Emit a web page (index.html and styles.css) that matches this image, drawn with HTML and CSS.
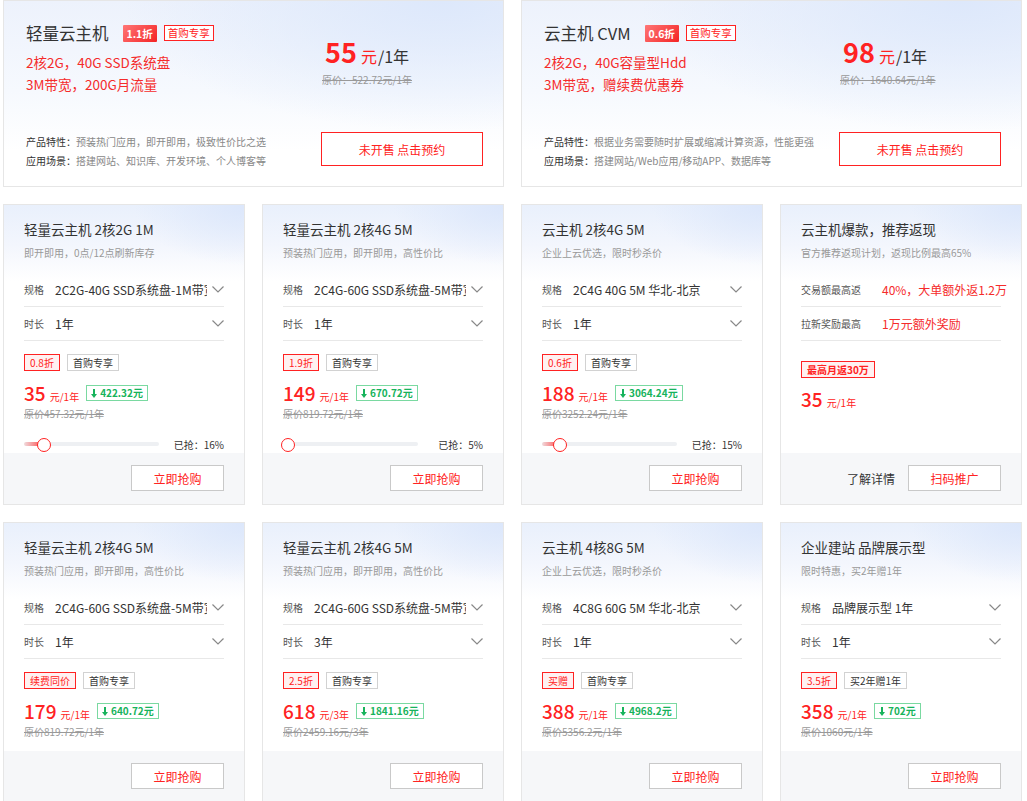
FILE: index.html
```html
<!DOCTYPE html>
<html lang="zh-CN">
<head>
  <meta charset="UTF-8" />
  <title>云服务器特惠</title>
  <meta name="viewport" content="width=device-width, initial-scale=1" />
  <link rel="stylesheet" href="styles.css">
</head>
<body>
<div class="page">
  <div class="hero-row">
    <div class="hero">
      <div class="hero-main">
        <div class="hero-title"><span class="name">轻量云主机</span><span class="badge">1.1折</span><span class="badge-line">首购专享</span></div>
        <div class="hero-spec">2核2G，40G SSD系统盘<br>3M带宽，200G月流量</div>
        <div class="features">
          <div><b>产品特性：</b>预装热门应用，即开即用，极致性价比之选</div>
          <div><b>应用场景：</b>搭建网站、知识库、开发环境、个人博客等</div>
        </div>
      </div>
      <div class="hero-side">
        <div class="hero-price"><span class="num">55</span><span class="unit">元</span><span class="per">/1年</span></div>
        <div class="hero-orig">原价：522.72元/1年</div>
        <button class="btn-book">未开售 点击预约</button>
      </div>
    </div>
    <div class="hero">
      <div class="hero-main">
        <div class="hero-title"><span class="name">云主机 CVM</span><span class="badge">0.6折</span><span class="badge-line">首购专享</span></div>
        <div class="hero-spec">2核2G，40G容量型Hdd<br>3M带宽，赠续费优惠券</div>
        <div class="features">
          <div><b>产品特性：</b>根据业务需要随时扩展或缩减计算资源，性能更强</div>
          <div><b>应用场景：</b>搭建网站/Web应用/移动APP、数据库等</div>
        </div>
      </div>
      <div class="hero-side">
        <div class="hero-price"><span class="num">98</span><span class="unit">元</span><span class="per">/1年</span></div>
        <div class="hero-orig">原价：1640.64元/1年</div>
        <button class="btn-book">未开售 点击预约</button>
      </div>
    </div>
  </div>

  <div class="grid">
    <div class="card">
      <div class="card-body">
        <div class="card-title">轻量云主机 2核2G 1M</div>
        <div class="card-sub">即开即用，0点/12点刷新库存</div>
        <div class="select"><span class="label">规格</span><span class="value">2C2G-40G SSD系统盘-1M带宽</span><svg class="chev" width="12" height="7" viewBox="0 0 12 7"><polyline points="0.5,0.5 6,6 11.5,0.5" fill="none" stroke="#888" stroke-width="1.2"/></svg></div>
        <div class="select"><span class="label">时长</span><span class="value">1年</span><svg class="chev" width="12" height="7" viewBox="0 0 12 7"><polyline points="0.5,0.5 6,6 11.5,0.5" fill="none" stroke="#888" stroke-width="1.2"/></svg></div>
        <div class="tags"><span class="tag red">0.8折</span><span class="tag">首购专享</span></div>
        <div class="price"><span class="num">35</span><span class="per">元/1年</span><span class="save"><svg width="6" height="9" viewBox="0 0 6 9"><path d="M2 0h2v5h2L3 9 0 5h2z" fill="#17b35c"/></svg>422.32元</span></div>
        <div class="orig">原价457.32元/1年</div>
        <div class="progress"><div class="track"><div class="fill" style="width:16%"></div></div><span class="sold">已抢：16%</span></div>
      </div>
      <div class="card-foot"><button class="btn">立即抢购</button></div>
    </div>

    <div class="card">
      <div class="card-body">
        <div class="card-title">轻量云主机 2核4G 5M</div>
        <div class="card-sub">预装热门应用，即开即用，高性价比</div>
        <div class="select"><span class="label">规格</span><span class="value">2C4G-60G SSD系统盘-5M带宽</span><svg class="chev" width="12" height="7" viewBox="0 0 12 7"><polyline points="0.5,0.5 6,6 11.5,0.5" fill="none" stroke="#888" stroke-width="1.2"/></svg></div>
        <div class="select"><span class="label">时长</span><span class="value">1年</span><svg class="chev" width="12" height="7" viewBox="0 0 12 7"><polyline points="0.5,0.5 6,6 11.5,0.5" fill="none" stroke="#888" stroke-width="1.2"/></svg></div>
        <div class="tags"><span class="tag red">1.9折</span><span class="tag">首购专享</span></div>
        <div class="price"><span class="num">149</span><span class="per">元/1年</span><span class="save"><svg width="6" height="9" viewBox="0 0 6 9"><path d="M2 0h2v5h2L3 9 0 5h2z" fill="#17b35c"/></svg>670.72元</span></div>
        <div class="orig">原价819.72元/1年</div>
        <div class="progress"><div class="track"><div class="fill" style="width:5%"></div></div><span class="sold">已抢：5%</span></div>
      </div>
      <div class="card-foot"><button class="btn">立即抢购</button></div>
    </div>

    <div class="card">
      <div class="card-body">
        <div class="card-title">云主机 2核4G 5M</div>
        <div class="card-sub">企业上云优选，限时秒杀价</div>
        <div class="select"><span class="label">规格</span><span class="value">2C4G 40G 5M 华北-北京</span><svg class="chev" width="12" height="7" viewBox="0 0 12 7"><polyline points="0.5,0.5 6,6 11.5,0.5" fill="none" stroke="#888" stroke-width="1.2"/></svg></div>
        <div class="select"><span class="label">时长</span><span class="value">1年</span><svg class="chev" width="12" height="7" viewBox="0 0 12 7"><polyline points="0.5,0.5 6,6 11.5,0.5" fill="none" stroke="#888" stroke-width="1.2"/></svg></div>
        <div class="tags"><span class="tag red">0.6折</span><span class="tag">首购专享</span></div>
        <div class="price"><span class="num">188</span><span class="per">元/1年</span><span class="save"><svg width="6" height="9" viewBox="0 0 6 9"><path d="M2 0h2v5h2L3 9 0 5h2z" fill="#17b35c"/></svg>3064.24元</span></div>
        <div class="orig">原价3252.24元/1年</div>
        <div class="progress"><div class="track"><div class="fill" style="width:15%"></div></div><span class="sold">已抢：15%</span></div>
      </div>
      <div class="card-foot"><button class="btn">立即抢购</button></div>
    </div>

    <div class="card">
      <div class="card-body">
        <div class="card-title">云主机爆款，推荐返现</div>
        <div class="card-sub">官方推荐返现计划，返现比例最高65%</div>
        <div class="select"><span class="rlabel">交易额最高返</span><span class="rvalue">40%，大单额外返1.2万</span></div>
        <div class="select"><span class="rlabel">拉新奖励最高</span><span class="rvalue">1万元额外奖励</span></div>
        <div class="tags tags-rebate"><span class="tag red strong">最高月返30万</span></div>
        <div class="price price-rebate"><span class="num">35</span><span class="per">元/1年</span></div>
      </div>
      <div class="card-foot"><span class="more">了解详情</span><button class="btn">扫码推广</button></div>
    </div>

    <div class="card">
      <div class="card-body">
        <div class="card-title">轻量云主机 2核4G 5M</div>
        <div class="card-sub">预装热门应用，即开即用，高性价比</div>
        <div class="select"><span class="label">规格</span><span class="value">2C4G-60G SSD系统盘-5M带宽</span><svg class="chev" width="12" height="7" viewBox="0 0 12 7"><polyline points="0.5,0.5 6,6 11.5,0.5" fill="none" stroke="#888" stroke-width="1.2"/></svg></div>
        <div class="select"><span class="label">时长</span><span class="value">1年</span><svg class="chev" width="12" height="7" viewBox="0 0 12 7"><polyline points="0.5,0.5 6,6 11.5,0.5" fill="none" stroke="#888" stroke-width="1.2"/></svg></div>
        <div class="tags"><span class="tag red">续费同价</span><span class="tag">首购专享</span></div>
        <div class="price"><span class="num">179</span><span class="per">元/1年</span><span class="save"><svg width="6" height="9" viewBox="0 0 6 9"><path d="M2 0h2v5h2L3 9 0 5h2z" fill="#17b35c"/></svg>640.72元</span></div>
        <div class="orig">原价819.72元/1年</div>
      </div>
      <div class="card-foot"><button class="btn">立即抢购</button></div>
    </div>

    <div class="card">
      <div class="card-body">
        <div class="card-title">轻量云主机 2核4G 5M</div>
        <div class="card-sub">预装热门应用，即开即用，高性价比</div>
        <div class="select"><span class="label">规格</span><span class="value">2C4G-60G SSD系统盘-5M带宽</span><svg class="chev" width="12" height="7" viewBox="0 0 12 7"><polyline points="0.5,0.5 6,6 11.5,0.5" fill="none" stroke="#888" stroke-width="1.2"/></svg></div>
        <div class="select"><span class="label">时长</span><span class="value">3年</span><svg class="chev" width="12" height="7" viewBox="0 0 12 7"><polyline points="0.5,0.5 6,6 11.5,0.5" fill="none" stroke="#888" stroke-width="1.2"/></svg></div>
        <div class="tags"><span class="tag red">2.5折</span><span class="tag">首购专享</span></div>
        <div class="price"><span class="num">618</span><span class="per">元/3年</span><span class="save"><svg width="6" height="9" viewBox="0 0 6 9"><path d="M2 0h2v5h2L3 9 0 5h2z" fill="#17b35c"/></svg>1841.16元</span></div>
        <div class="orig">原价2459.16元/3年</div>
      </div>
      <div class="card-foot"><button class="btn">立即抢购</button></div>
    </div>

    <div class="card">
      <div class="card-body">
        <div class="card-title">云主机 4核8G 5M</div>
        <div class="card-sub">企业上云优选，限时秒杀价</div>
        <div class="select"><span class="label">规格</span><span class="value">4C8G 60G 5M 华北-北京</span><svg class="chev" width="12" height="7" viewBox="0 0 12 7"><polyline points="0.5,0.5 6,6 11.5,0.5" fill="none" stroke="#888" stroke-width="1.2"/></svg></div>
        <div class="select"><span class="label">时长</span><span class="value">1年</span><svg class="chev" width="12" height="7" viewBox="0 0 12 7"><polyline points="0.5,0.5 6,6 11.5,0.5" fill="none" stroke="#888" stroke-width="1.2"/></svg></div>
        <div class="tags"><span class="tag red">买赠</span><span class="tag">首购专享</span></div>
        <div class="price"><span class="num">388</span><span class="per">元/1年</span><span class="save"><svg width="6" height="9" viewBox="0 0 6 9"><path d="M2 0h2v5h2L3 9 0 5h2z" fill="#17b35c"/></svg>4968.2元</span></div>
        <div class="orig">原价5356.2元/1年</div>
      </div>
      <div class="card-foot"><button class="btn">立即抢购</button></div>
    </div>

    <div class="card">
      <div class="card-body">
        <div class="card-title">企业建站 品牌展示型</div>
        <div class="card-sub">限时特惠，买2年赠1年</div>
        <div class="select"><span class="label">规格</span><span class="value">品牌展示型 1年</span><svg class="chev" width="12" height="7" viewBox="0 0 12 7"><polyline points="0.5,0.5 6,6 11.5,0.5" fill="none" stroke="#888" stroke-width="1.2"/></svg></div>
        <div class="select"><span class="label">时长</span><span class="value">1年</span><svg class="chev" width="12" height="7" viewBox="0 0 12 7"><polyline points="0.5,0.5 6,6 11.5,0.5" fill="none" stroke="#888" stroke-width="1.2"/></svg></div>
        <div class="tags"><span class="tag red">3.5折</span><span class="tag">买2年赠1年</span></div>
        <div class="price"><span class="num">358</span><span class="per">元/1年</span><span class="save"><svg width="6" height="9" viewBox="0 0 6 9"><path d="M2 0h2v5h2L3 9 0 5h2z" fill="#17b35c"/></svg>702元</span></div>
        <div class="orig">原价1060元/1年</div>
      </div>
      <div class="card-foot"><button class="btn">立即抢购</button></div>
    </div>
  </div>
</div>
</body>
</html>
```

FILE: styles.css
```css
*{box-sizing:border-box;}
body{
  margin:0;background:#fff;color:#333;
  font-family:"Noto Sans CJK SC","Noto Sans",sans-serif;
}
button{font-family:inherit;cursor:pointer;}
.page{width:1022px;padding-left:3px;}

/* top two large cards */
.hero-row{display:grid;grid-template-columns:501px 501px;gap:17px;}
.hero{
  display:flex;height:187px;border:1px solid #e6e6e6;
  padding:20px 20px 0 22px;
  background:
    radial-gradient(ellipse 320px 130px at 88% 0,#dde8fb 0,rgba(221,232,251,0) 100%),
    linear-gradient(180deg,#edf2fc 0,#f6f9fe 90px,#fff 150px);
}
.hero-main{flex:1;display:flex;flex-direction:column;min-width:0;}
.hero-title{display:flex;align-items:center;height:24px;font-size:16.5px;color:#333;}
.hero-title .name{margin-right:14px;}
.badge{
  height:17px;line-height:17px;padding:0 4px;font-size:10.5px;font-weight:bold;color:#fff;
  background:linear-gradient(135deg,#ff7676,#f42424);border-radius:1px;margin-right:7px;
}
.badge-line{
  height:16px;line-height:14px;padding:0 3px;font-size:10.5px;color:#f22;
  border:1px solid #f22;background:#fff;
}
.hero-spec{margin-top:6px;font-size:13.5px;line-height:22px;color:#f52b2b;}
.features{margin-top:auto;padding-bottom:16px;font-size:10px;line-height:19px;color:#888;}
.features b{font-weight:normal;color:#333;}
.hero-side{width:162px;display:flex;flex-direction:column;}
.hero-price{margin-top:15px;height:32px;line-height:32px;padding-left:4px;white-space:nowrap;}
.hero-price .num{font-size:27px;font-weight:bold;color:#f22;}
.hero-price .unit{font-size:16px;color:#f22;margin-left:4px;}
.hero-price .per{font-size:16px;color:#333;margin-left:1px;}
.hero-orig{margin-top:5px;line-height:14px;font-size:10px;color:#999;text-decoration:line-through;padding-left:1px;}
.btn-book{
  margin-top:auto;margin-bottom:20px;height:34px;width:162px;
  border:1px solid #f22;background:#fff;color:#f22;font-size:12px;
}

/* product grid */
.grid{display:grid;grid-template-columns:repeat(4,242px);gap:17px;margin-top:17px;}
.card{
  display:flex;flex-direction:column;border:1px solid #e6e6e6;
  background:
    radial-gradient(ellipse 110px 60px at 100% 0,#dce7fb 0,rgba(220,231,251,0) 100%),
    linear-gradient(180deg,#e9f0fc 0,#f3f6fd 40px,#fff 76px);
}
.card-body{padding:14px 20px 12px;}
.card-title{font-size:13.5px;line-height:20px;color:#333;}
.card-sub{margin-top:6px;font-size:10px;line-height:16px;color:#999;}
.select{display:flex;align-items:center;height:34px;border-bottom:1px solid #e8e8e8;}
.card-sub + .select{margin-top:12px;}
.select .label{width:31px;flex:none;font-size:10px;color:#555;}
.select .value{flex:1;min-width:0;overflow:hidden;white-space:nowrap;font-size:12px;color:#333;}
.chev{flex:none;margin-left:5px;}
.rlabel{width:81px;flex:none;font-size:10px;color:#555;}
.rvalue{font-size:12px;color:#f52b2b;white-space:nowrap;}

.tags{display:flex;gap:7px;margin-top:13px;height:17px;}
.tag{
  height:17px;line-height:15px;padding:0 5px;font-size:10px;color:#333;
  border:1px solid #d2d2d2;background:#fff;white-space:nowrap;
}
.tag.red{border-color:#f22;color:#f22;background:#fff1f1;}
.tag.strong{font-weight:bold;}
.tags-rebate{margin-top:20px;}

.price{display:flex;align-items:baseline;margin-top:11px;height:22px;line-height:22px;white-space:nowrap;}
.price .num{font-size:19px;font-weight:500;color:#f22;}
.price .per{font-size:10px;color:#f22;margin-left:4px;}
.price-rebate{margin-top:10px;}
.save{
  align-self:center;display:flex;align-items:center;gap:3px;margin-left:7px;
  height:16px;padding:0 4px;border:1px solid #7ad9a1;color:#17b35c;
  font-size:10px;font-weight:bold;
}
.orig{margin-top:3px;font-size:10px;line-height:14px;color:#999;text-decoration:line-through;}

.progress{display:flex;align-items:center;margin:16px 0 -10px;height:14px;}
.track{position:relative;width:135px;height:4px;border-radius:2px;background:#eef0f3;}
.fill{position:relative;height:4px;border-radius:2px;background:linear-gradient(90deg,rgba(255,60,60,.12),#f33);}
.fill::after{
  content:"";position:absolute;right:-5px;top:-4px;width:12px;height:12px;
  border:1.5px solid #f22;border-radius:50%;background:#fff;
}
.sold{margin-left:auto;font-size:10px;color:#333;}

.card-foot{
  margin-top:auto;display:flex;align-items:center;justify-content:flex-end;
  height:51px;padding:0 20px 1px;background:#f6f7f9;
}
.btn{width:93px;height:26px;border:1px solid #c9c9c9;background:#fff;color:#f22;font-size:12px;}
.more{font-size:12px;color:#333;margin-right:13px;}
```
